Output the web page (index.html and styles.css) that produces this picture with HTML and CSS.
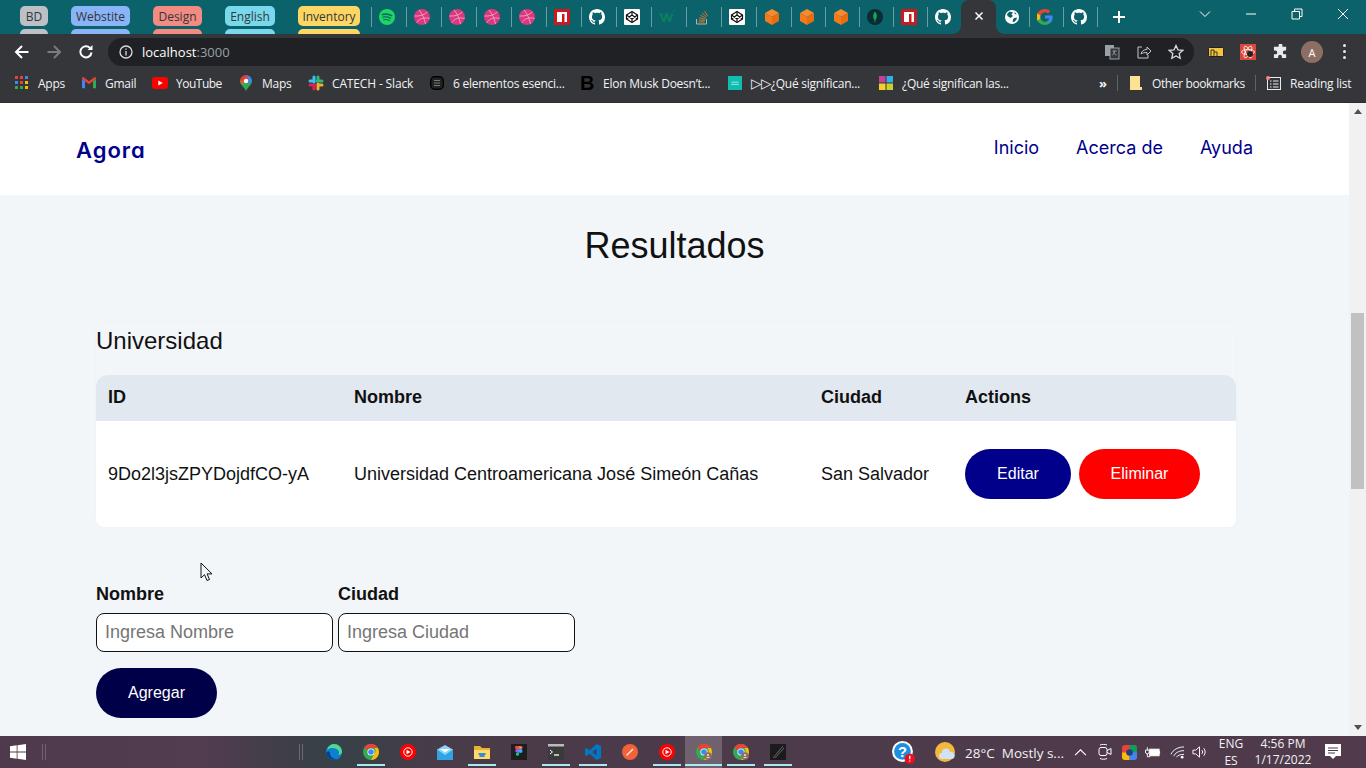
FILE: index.html
```html
<!DOCTYPE html>
<html lang="es">
<head>
<meta charset="utf-8">
<title>Agora</title>
<link rel="stylesheet" href="styles.css">
</head>
<body>
<svg class="defs" width="0" height="0" aria-hidden="true">
  <symbol id="i-github" viewBox="0 0 16 16"><path fill="#fff" d="M8 0C3.58 0 0 3.58 0 8c0 3.54 2.29 6.53 5.47 7.59.4.07.55-.17.55-.38 0-.19-.01-.82-.01-1.49-2.01.37-2.53-.49-2.69-.94-.09-.23-.48-.94-.82-1.13-.28-.15-.68-.52-.01-.53.63-.01 1.08.58 1.23.82.72 1.21 1.87.87 2.33.66.07-.52.28-.87.51-1.07-1.78-.2-3.64-.89-3.64-3.95 0-.87.31-1.59.82-2.15-.08-.2-.36-1.02.08-2.12 0 0 .67-.21 2.2.82.64-.18 1.32-.27 2-.27.68 0 1.36.09 2 .27 1.53-1.04 2.2-.82 2.2-.82.44 1.1.16 1.92.08 2.12.51.56.82 1.27.82 2.15 0 3.07-1.87 3.75-3.65 3.95.29.25.54.73.54 1.48 0 1.07-.01 1.93-.01 2.2 0 .21.15.46.55.38A8.013 8.013 0 0016 8c0-4.42-3.58-8-8-8z"/></symbol>
  <symbol id="i-spotify" viewBox="0 0 16 16"><circle cx="8" cy="8" r="8" fill="#1ed760"/><path fill="none" stroke="#0c626b" stroke-linecap="round" stroke-width="1.6" d="M3.4 5.6c3-.8 6.4-.5 9.2 1"/><path fill="none" stroke="#0c626b" stroke-linecap="round" stroke-width="1.3" d="M4 8.2c2.6-.6 5.2-.3 7.6 1"/><path fill="none" stroke="#0c626b" stroke-linecap="round" stroke-width="1.1" d="M4.6 10.7c2-.4 4-.2 5.9.8"/></symbol>
  <symbol id="i-dribbble" viewBox="0 0 16 16"><circle cx="8" cy="8" r="8" fill="#d8397f"/><g fill="none" stroke="#f7a0c4" stroke-width=".9"><path d="M5 1c3 3.500 5.500 8.500 6.500 14"/><path d="M.4 7c5 .4 9.800-.8 12.800-4"/><path d="M2.800 13.800c2.200-3.800 6.700-6 12.900-4.300"/></g></symbol>
  <symbol id="i-npm" viewBox="0 0 16 16"><rect width="16" height="16" fill="#cb1a1f"/><rect x="3" y="3" width="10" height="10" fill="#fff"/><rect x="8" y="5" width="2.500" height="8" fill="#cb1a1f"/></symbol>
  <symbol id="i-codepen" viewBox="0 0 16 16"><rect width="16" height="16" rx="1" fill="#fff"/><g fill="none" stroke="#111" stroke-width="1.200" stroke-linejoin="round"><path d="M8 2.500 13.500 6v4L8 13.500 2.500 10V6z"/><path d="M8 6 13.500 10M8 6 2.500 10M8 10l5.500-4M8 10 2.500 6M8 2.500V6M8 10v3.500"/></g></symbol>
  <symbol id="i-w3" viewBox="0 0 16 16"><path fill="#0a7f5f" d="M0 4h3l1.500 5.500L6.500 4h2.200l1.900 5.500L12 5h2.500L11.600 13H9.300L7.800 8.500 6.200 13H3.700z"/><path fill="none" stroke="#0a7f5f" stroke-width=".7" d="M13.500 1.500h2l-1 1c.8 0 .8 1.500-.9 1.200"/></symbol>
  <symbol id="i-stack" viewBox="0 0 16 16"><path fill="none" stroke="#b9b2a8" stroke-width="1" d="M2.500 10v5h10v-5"/><g fill="none" stroke="#e8781f" stroke-width=".9"><path d="M4.500 13h6M4.800 11l6 .6M5.200 8.800l6 1.600M6.400 6.300l5.400 2.800M8.200 4l4.500 4M10.500 2l3.200 5"/></g></symbol>
  <symbol id="i-box" viewBox="0 0 16 16"><path fill="#f78a2e" d="M8 0 15 4 8 8 1 4z"/><path fill="#f47a1c" d="M1 4 8 8v8l-7-4z"/><path fill="#e96c10" d="M15 4 8 8v8l7-4z"/></symbol>
  <symbol id="i-mongo" viewBox="0 0 16 16"><circle cx="8" cy="8" r="8" fill="#0b2b36"/><path fill="#13aa52" d="M8 2.500c2.200 2.500 2.600 5.500.5 8.500l-.3 2.500h-.5L7.400 11c-2-2.800-1.500-6 .6-8.500z"/></symbol>
  <symbol id="i-globe" viewBox="0 0 16 16"><circle cx="8" cy="8" r="7" fill="#fff"/><path fill="#0c626b" d="M5.500 2.500 9 3.500 7.500 5.500 9 7 6.500 9 3.500 7l-.5-2zM10 9l3-.5-.7 2.500-2.300 2-1.500-.3.500-2.200zM10.500 3l2.300 2-2 .3z"/></symbol>
  <symbol id="i-google" viewBox="0 0 16 16"><path fill="#4285f4" d="M15.700 8.200c0-.6-.1-1.100-.2-1.600H8v3h4.300c-.2 1-.8 1.800-1.600 2.400v2h2.600c1.500-1.400 2.400-3.400 2.400-5.800z"/><path fill="#34a853" d="M8 16c2.200 0 4-.7 5.300-1.900l-2.600-2c-.7.500-1.600.8-2.700.8-2.100 0-3.900-1.400-4.500-3.300H.4v2.100C1.700 14.300 4.600 16 8 16z"/><path fill="#fbbc05" d="M3.500 9.600c-.3-1-.3-2.200 0-3.200V4.300H.4C-.3 6 -.3 10 .4 11.700z"/><path fill="#ea4335" d="M8 3.200c1.200 0 2.200.4 3 1.200l2.300-2.300C11.900.8 10.100 0 8 0 4.600 0 1.700 1.700.4 4.300l3.100 2.100C4.100 4.600 5.900 3.200 8 3.200z"/></symbol>
  <symbol id="i-chrome" viewBox="0 0 16 16"><circle cx="8" cy="8" r="8" fill="#34a853"/><path fill="#ea4335" d="M8 0a8 8 0 0 1 6.900 4H8a4 4 0 0 0-3.700 2.400L1.500 3.200A8 8 0 0 1 8 0z"/><path fill="#fbbc05" d="M14.900 4A8 8 0 0 1 8 16l3.400-6a4 4 0 0 0-.2-6z"/><circle cx="8" cy="8" r="3.600" fill="#fff"/><circle cx="8" cy="8" r="2.800" fill="#4285f4"/></symbol>
  <symbol id="i-chrome-badge" viewBox="0 0 16 16"><use href="#i-chrome"/><circle cx="12" cy="12" r="3.800" fill="#8d6e63"/><circle cx="12" cy="11" r="1.100" fill="#e8e0dc"/><path d="M10 14c.4-1.500 3.600-1.500 4 0z" fill="#e8e0dc"/></symbol>
  <symbol id="i-ytm" viewBox="0 0 16 16"><circle cx="8" cy="8" r="8" fill="#f00"/><circle cx="8" cy="8" r="4.200" fill="none" stroke="#fff" stroke-width="1"/><path fill="#fff" d="M6.500 5.800 10.500 8l-4 2.200z"/></symbol>
</svg>

<div class="tabstrip">
  <div class="chip-wrap chip-bd"><span class="chip">BD</span><i class="sliver"></i></div>
  <div class="chip-wrap chip-web"><span class="chip">Webstite</span><i class="sliver"></i></div>
  <div class="chip-wrap chip-des"><span class="chip">Design</span><i class="sliver"></i></div>
  <div class="chip-wrap chip-eng"><span class="chip">English</span><i class="sliver"></i></div>
  <div class="chip-wrap chip-inv"><span class="chip">Inventory</span><i class="sliver"></i></div>
  <div class="tab"><svg class="ti"><use href="#i-spotify"/></svg></div>
  <div class="tab"><svg class="ti"><use href="#i-dribbble"/></svg></div>
  <div class="tab"><svg class="ti"><use href="#i-dribbble"/></svg></div>
  <div class="tab"><svg class="ti"><use href="#i-dribbble"/></svg></div>
  <div class="tab"><svg class="ti"><use href="#i-dribbble"/></svg></div>
  <div class="tab"><svg class="ti"><use href="#i-npm"/></svg></div>
  <div class="tab"><svg class="ti"><use href="#i-github"/></svg></div>
  <div class="tab"><svg class="ti"><use href="#i-codepen"/></svg></div>
  <div class="tab"><svg class="ti"><use href="#i-w3"/></svg></div>
  <div class="tab"><svg class="ti"><use href="#i-stack"/></svg></div>
  <div class="tab"><svg class="ti"><use href="#i-codepen"/></svg></div>
  <div class="tab"><svg class="ti"><use href="#i-box"/></svg></div>
  <div class="tab tab-n"><svg class="ti"><use href="#i-box"/></svg></div>
  <div class="tab tab-n"><svg class="ti"><use href="#i-box"/></svg></div>
  <div class="tab tab-n"><svg class="ti"><use href="#i-mongo"/></svg></div>
  <div class="tab tab-n"><svg class="ti"><use href="#i-npm"/></svg></div>
  <div class="tab tab-n"><svg class="ti"><use href="#i-github"/></svg></div>
  <div class="tab-active"><svg class="close-x" viewBox="0 0 10 10"><path d="M1.500 1.500l7 7M8.500 1.500l-7 7"/></svg></div>
  <div class="tab tab-n tab-after"><svg class="ti"><use href="#i-globe"/></svg></div>
  <div class="tab tab-n"><svg class="ti"><use href="#i-google"/></svg></div>
  <div class="tab tab-n"><svg class="ti"><use href="#i-github"/></svg></div>
  <div class="tab-end"><svg class="plus" viewBox="0 0 12 12"><path d="M6 0v12M0 6h12"/></svg></div>
  <div class="winctl">
    <svg class="wi" viewBox="0 0 12 12"><path d="M1 3.500 6 8.500l5-5"/></svg>
    <svg class="wi" viewBox="0 0 12 12"><path d="M1 6h10"/></svg>
    <svg class="wi" viewBox="0 0 12 12"><path d="M1 3.500h7.500V11H1zM3.500 3.500V1H11v7.500H8.500"/></svg>
    <svg class="wi" viewBox="0 0 12 12"><path d="M1 1l10 10M11 1 1 11"/></svg>
  </div>
</div>

<div class="toolbar">
  <svg class="nav-i" viewBox="0 0 16 16"><path d="M14.500 8H2M8 2 2 8l6 6" stroke="#fff"/></svg>
  <svg class="nav-i" viewBox="0 0 16 16"><path d="M1.500 8H14M8 2l6 6-6 6" stroke="#7b7c7f"/></svg>
  <svg class="nav-i" viewBox="0 0 16 16"><path d="M13.500 8.500A5.600 5.600 0 1 1 12 3.900" stroke="#fff"/><path d="M14.500 1v5h-5z" fill="#fff" stroke="none"/></svg>
  <div class="omnibox">
    <svg class="info" viewBox="0 0 14 14"><circle cx="7" cy="7" r="6"/><path d="M7 6v4.500M7 3.500v1.300"/></svg>
    <span class="url">localhost<span class="url-port">:3000</span></span>
    <span class="omni-right">
      <svg class="omni-i" viewBox="0 0 16 16"><rect x="1" y="1" width="9" height="11" fill="#9aa0a6"/><rect x="6" y="4" width="9" height="11" fill="#35363a" stroke="#9aa0a6"/><path d="M8.500 7h4M10.500 7c0 2-1 3.500-2 4M9.500 8.500c.5 1 1.500 2 3 2.500" fill="none" stroke="#9aa0a6"/></svg>
      <svg class="omni-i" viewBox="0 0 16 16"><path d="M6 3H2v11h10v-3" fill="none" stroke="#c4c7c5"/><path d="M5 10c.5-3 3-4.500 6-4.500V3l4 4-4 4V8.500c-2.500 0-4.500.3-6 1.500z" fill="none" stroke="#c4c7c5"/></svg>
      <svg class="omni-i" viewBox="0 0 16 16"><path d="M8 1.500l2 4.400 4.800.5-3.600 3.200 1 4.700L8 11.900l-4.200 2.400 1-4.700L1.200 6.400 6 5.900z" fill="none" stroke="#dadce0" stroke-width="1.300"/></svg>
    </span>
  </div>
  <svg class="ext ext-a" viewBox="0 0 16 12"><rect x=".5" y="1.500" width="15" height="9" rx="1" fill="#f3c33c" stroke="#222"/><path d="M3 10V4h3v6M6 6h3v4" fill="none" stroke="#333"/></svg>
  <svg class="ext ext-b" viewBox="0 0 16 16"><rect width="16" height="16" fill="#d9483b"/><g fill="none" stroke="#fff" stroke-width=".8"><ellipse cx="8" cy="8" rx="6.500" ry="2.500"/><ellipse cx="8" cy="8" rx="6.500" ry="2.500" transform="rotate(60 8 8)"/><ellipse cx="8" cy="8" rx="6.500" ry="2.500" transform="rotate(120 8 8)"/></g><circle cx="10" cy="10" r="3" fill="#222"/></svg>
  <svg class="ext ext-c" viewBox="0 0 16 16"><path fill="#e8eaed" d="M6 1.500a2 2 0 0 1 4 0V3h4v4h-1.500a2 2 0 0 0 0 4H14v4H9.500v-1.500a2 2 0 0 0-4 0V15H1v-4h1.500a2 2 0 0 0 0-4H1V3h5z"/></svg>
  <span class="avatar">A</span>
  <span class="kebab"><i></i><i></i><i></i></span>
</div>

<div class="bookmarks">
  <span class="bm bm-apps"><svg class="bi" viewBox="0 0 14 14"><g fill="#ea4335"><rect width="3" height="3"/><rect x="5" width="3" height="3"/><rect x="10" width="3" height="3" fill="#4285f4"/></g><g fill="#34a853"><rect y="5" width="3" height="3" fill="#4285f4"/><rect x="5" y="5" width="3" height="3" fill="#ea4335"/><rect x="10" y="5" width="3" height="3" fill="#fbbc05"/><rect y="10" width="3" height="3"/><rect x="5" y="10" width="3" height="3"/><rect x="10" y="10" width="3" height="3" fill="#fbbc05"/></g></svg>Apps</span>
  <span class="bm bm-gmail"><svg class="bi" viewBox="0 0 16 14"><path fill="#ea4335" d="M0 2.500 8 8.500l8-6V1l-1.500-1L8 5 1.500 0 0 1z"/><path fill="#4285f4" d="M0 2.500V13h3.500V5.200z"/><path fill="#34a853" d="M16 2.500V13h-3.500V5.200z"/></svg>Gmail</span>
  <span class="bm bm-yt"><svg class="bi bi-w" viewBox="0 0 16 12"><rect width="16" height="12" rx="3" fill="#f00"/><path fill="#fff" d="M6.300 3.400 10.800 6l-4.500 2.600z"/></svg>YouTube</span>
  <span class="bm bm-maps"><svg class="bi bi-m" viewBox="0 0 12 16"><path fill="#34a853" d="M6 16C4 12 0 9.500 0 6h12c0 3.500-4 6-6 10z"/><path fill="#fbbc05" d="M0 6l3 3 2-4z"/><path fill="#4285f4" d="M6 0a6 6 0 0 1 6 6L9 9 5 5z"/><path fill="#ea4335" d="M6 0a6 6 0 0 0-6 6l3 3 6-6z" opacity=".9"/><circle cx="6" cy="6" r="2.200" fill="#fff"/></svg>Maps</span>
  <span class="bm bm-slack"><svg class="bi bi-s" viewBox="0 0 16 16"><g stroke-width="3" stroke-linecap="round"><path stroke="#36c5f0" d="M6 2v5M2 6h4"/><path stroke="#2eb67d" d="M14 6H9M10 2v4"/><path stroke="#ecb22e" d="M10 14V9M14 10h-4"/><path stroke="#e01e5a" d="M2 10h5M6 14v-4"/></g></svg>CATECH - Slack</span>
  <span class="bm bm-six"><svg class="bi" viewBox="0 0 14 14"><rect x=".7" y=".7" width="12.600" height="12.600" rx="4" fill="#222" stroke="#000" stroke-width="1.400"/><path d="M4 4.500h6M4 7h6M4 9.500h6" stroke="#777"/></svg>6 elementos esenci...</span>
  <span class="bm bm-elon"><span class="bi-b">B</span>Elon Musk Doesn’t...</span>
  <span class="bm bm-teal"><svg class="bi bi-w" viewBox="0 0 16 16"><rect width="16" height="16" fill="#12bdb0"/><path d="M4 7h8M3.500 9.500h9" stroke="#bff" stroke-width=".8"/></svg><span class="tri">▷▷</span>¿Qué significan...</span>
  <span class="bm bm-que"><svg class="bi" viewBox="0 0 14 14"><rect width="6.500" height="6.500" fill="#c53e9d"/><rect x="7.500" width="6.500" height="6.500" fill="#2eb0e4"/><rect y="7.500" width="6.500" height="6.500" fill="#f6cf2a"/><rect x="7.500" y="7.500" width="6.500" height="6.500" fill="#c7d12f"/></svg>¿Qué significan las...</span>
  <span class="bm-more">»</span>
  <i class="bm-sep"></i>
  <span class="bm bm-other"><svg class="bi bi-f" viewBox="0 0 12 14"><path fill="#fde293" d="M0 0h10v11h2v3H0z"/></svg>Other bookmarks</span>
  <i class="bm-sep bm-sep-b"></i>
  <span class="bm bm-read"><svg class="bi bi-r" viewBox="0 0 15 14"><rect x="1.500" y="1.500" width="13" height="12" fill="none" stroke="#e8eaed"/><path d="M4 5h1.500M7 5h5.500M4 8h1.500M7 8h5.500M4 11h1.500M7 11h5.500" stroke="#e8eaed"/><circle cx="2" cy="2" r="2" fill="#f28b82"/></svg>Reading list</span>
</div>

<div class="viewport">
  <main class="page">
    <header class="site-header">
      <span class="logo">Agora</span>
      <nav class="site-nav"><a>Inicio</a><a>Acerca de</a><a>Ayuda</a></nav>
    </header>
    <h1 class="title">Resultados</h1>
    <section class="card">
      <h2 class="card-title">Universidad</h2>
      <table class="table">
        <thead><tr><th class="c-id">ID</th><th class="c-name">Nombre</th><th class="c-city">Ciudad</th><th>Actions</th></tr></thead>
        <tbody><tr>
          <td>9Do2l3jsZPYDojdfCO-yA</td>
          <td>Universidad Centroamericana José Simeón Cañas</td>
          <td>San Salvador</td>
          <td class="actions"><button class="btn btn-edit">Editar</button><button class="btn btn-del">Eliminar</button></td>
        </tr></tbody>
      </table>
    </section>
    <form class="form">
      <div class="fields">
        <label class="field"><span class="label">Nombre</span><input class="input" placeholder="Ingresa Nombre"></label>
        <label class="field"><span class="label">Ciudad</span><input class="input" placeholder="Ingresa Ciudad"></label>
      </div>
      <button type="button" class="btn btn-add">Agregar</button>
    </form>
  </main>
  <div class="scrollbar">
    <svg class="arrow" viewBox="0 0 8 5"><path d="M4 0 8 5H0z"/></svg>
    <div class="track"><div class="thumb"></div></div>
    <svg class="arrow" viewBox="0 0 8 5"><path d="M0 0h8L4 5z"/></svg>
  </div>
  <svg class="cursor" viewBox="0 0 13 20"><path d="M1 1v15l3.500-3.300L7 18.500l2.500-1-2.400-5.600H12z" fill="#f3f6f9" stroke="#111" stroke-width="1"/></svg>
</div>

<footer class="taskbar">
  <svg class="win" viewBox="0 0 16 16"><path fill="#fff" d="M0 2.300 6.700 1.300v6.300H0zM7.500 1.200 16 0v7.600H7.500zM0 8.400h6.700v6.300L0 13.700zM7.500 8.400H16V16l-8.500-1.200z"/></svg>
  <i class="grip grip-a"></i>
  <i class="grip grip-b"></i>
  <div class="tb">
    <svg class="tbi" viewBox="0 0 16 16"><circle cx="8" cy="8" r="8" fill="#0c7fd0"/><path fill="#4fd98e" d="M8 0a8 8 0 0 1 8 8c0 2-2 3-4 3 1.500-1 1.500-3.500 0-5C9.500 3.500 4 3 1 6c1-3.500 4-6 7-6z"/><path fill="#0a3f8a" d="M4 8c-1 3 2 7 7 7-5 2-10-1-11-6 1-1 3-2 4-1z"/></svg>
  </div>
  <div class="tb tb-on"><svg class="tbi"><use href="#i-chrome"/></svg></div>
  <div class="tb"><svg class="tbi"><use href="#i-ytm"/></svg></div>
  <div class="tb"><svg class="tbi" viewBox="0 0 16 16"><path fill="#2ea3e6" d="M0 5.500h16V16H0z"/><path fill="#8ad4f5" d="M0 5.500 8 11l8-5.500L8 1z"/><path fill="#fff" d="M3 5h10L8 8.500z"/></svg></div>
  <div class="tb tb-on"><svg class="tbi" viewBox="0 0 16 16"><path fill="#e8b13a" d="M0 2h6l2 2h8v11H0z"/><path fill="#ffd968" d="M0 6h16v9H0z"/><path fill="#2b8fd6" d="M4.500 9h7v2h-1v2h-5v-2h-1z"/></svg></div>
  <div class="tb"><svg class="tbi" viewBox="0 0 16 16"><rect width="16" height="16" fill="#1e1e1e"/><circle cx="9.500" cy="7" r="2" fill="#1abcfe"/><path fill="#f24e1e" d="M5 2h3v3H6a1.500 1.500 0 0 1-1-3z"/><path fill="#ff7262" d="M8 2h2a1.500 1.500 0 0 1 0 3H8z"/><path fill="#a259ff" d="M6 5h2v3.500H6a1.700 1.700 0 0 1 0-3.500z"/><path fill="#0acf83" d="M6 8.500h2V11a1.700 1.700 0 1 1-2-2.500z"/></svg></div>
  <div class="tb tb-on"><svg class="tbi" viewBox="0 0 16 16"><rect width="16" height="16" fill="#3a3a3a"/><rect width="16" height="2.500" fill="#bbb"/><path d="M2 6l2.500 2L2 10" fill="none" stroke="#fff"/><path d="M6 11h5" stroke="#fff" stroke-width="1.300"/></svg></div>
  <div class="tb tb-on"><svg class="tbi" viewBox="0 0 16 16"><path fill="#0078c8" d="M11.500 0 16 2v12l-4.500 2L4.500 9.500 1.500 12 0 11V5l1.500-1 3 2.500zM11.500 4.500 7.500 8l4 3.500z"/></svg></div>
  <div class="tb"><svg class="tbi" viewBox="0 0 16 16"><circle cx="8" cy="8" r="8" fill="#f0623a"/><path d="M4.500 11.500 11 5" stroke="#ffe5d9" stroke-width="1.500"/></svg></div>
  <div class="tb tb-on"><svg class="tbi"><use href="#i-ytm"/></svg></div>
  <div class="tb tb-on tb-active"><svg class="tbi"><use href="#i-chrome-badge"/></svg></div>
  <div class="tb tb-on"><svg class="tbi"><use href="#i-chrome-badge"/></svg></div>
  <div class="tb tb-on"><svg class="tbi" viewBox="0 0 16 16"><rect width="16" height="16" fill="#1b1b1d"/><path d="M3 14 13 2M5 14 14 4" stroke="#666"/></svg></div>
  <svg class="tray-help" viewBox="0 0 22 22"><circle cx="10" cy="10" r="10" fill="#fff"/><circle cx="10" cy="10" r="8" fill="#1d8fe0"/><text class="help-q" x="10" y="15">?</text><circle cx="17" cy="17" r="5" fill="#e81123"/><path d="M17 14v3.500M17 18.700v1" stroke="#fff" stroke-width="1.200"/></svg>
  <svg class="tray-sun" viewBox="0 0 20 20"><circle cx="10" cy="10" r="10" fill="#f4b83c"/><path fill="#cfe3f5" d="M7 17a3 3 0 0 1 0-6 4 4 0 0 1 8-1 3.500 3.500 0 0 1 2 7z"/></svg>
  <span class="weather">28°C&nbsp; Mostly s...</span>
  <svg class="tray tray-up" viewBox="0 0 12 12"><path d="M1 8.500 6 3.500l5 5"/></svg>
  <svg class="tray tray-meet" viewBox="0 0 14 16"><rect x="1" y="3.500" width="8" height="8" rx="2"/><path d="M9 6.500l4-2v6l-4-2M2 14.500c2 1 5 1 7 0M2 1c2-.8 5-.8 7 0"/></svg>
  <svg class="tray-wheel" viewBox="0 0 16 16"><rect width="16" height="16" rx="3.500" fill="#ea4335"/><path d="M8 0h4.500A3.500 3.500 0 0 1 16 3.500V8H8z" fill="#0f9d58"/><path d="M0 8h8v8H3.500A3.500 3.500 0 0 1 0 12.500z" fill="#fbbc05"/><path d="M8 8h8v4.500a3.500 3.500 0 0 1-3.500 3.500H8z" fill="#4285f4"/><circle cx="8" cy="8" r="3.500" fill="#1d3f8a"/></svg>
  <svg class="tray tray-batt" viewBox="0 0 17 12"><rect x="5" y="3" width="10" height="7" fill="#fff"/><path d="M15.500 5v3M2.500 1v3M0.500 4h4v2a2 2 0 0 1-4 0zM2.500 8v3h3"/></svg>
  <svg class="tray tray-wifi" viewBox="0 0 16 14"><path d="M1 9c2-5 8-8 14-8M4 11c1-3 5-6 11-6M7 12c1-2 4-3 8-3"/><circle cx="13" cy="12" r="1.500" fill="#fff" stroke="none"/></svg>
  <svg class="tray tray-vol" viewBox="0 0 16 14"><path d="M1 5h3l4-3.500v11L4 9H1zM10.500 5c1 1 1 3 0 4M12.500 3c2 2 2 6 0 8"/></svg>
  <div class="lang"><span>ENG</span><span>ES</span></div>
  <div class="clock"><span>4:56 PM</span><span>1/17/2022</span></div>
  <svg class="tray-note" viewBox="0 0 16 16"><path fill="#fff" d="M0 0h16v12h-5l-3 3-3-3H0z"/><path d="M3 4h10M3 6.500h10M3 9h7" stroke="#4b394b"/></svg>
</footer>
</body>
</html>
```
FILE: styles.css
```css
* { box-sizing: border-box; }
html, body { margin: 0; height: 100%; }
body {
  width: 1366px;
  height: 768px;
  overflow: hidden;
  display: flex;
  flex-direction: column;
  font-family: "Liberation Sans", Arial, sans-serif;
  background: #f3f6f9;
}
.defs { display: block; height: 0; }

/* tab strip */
.tabstrip {
  flex: 0 0 34px;
  height: 34px;
  overflow: hidden;
  background: #0c626b;
  display: flex;
  align-items: stretch;
  padding-left: 20px;
  font-family: "Open Sans", sans-serif;
}
.chip-wrap { display: flex; flex-direction: column; padding-top: 6px; margin-right: 23px; }
.chip {
  height: 22px;
  display: flex;
  align-items: center;
  justify-content: center;
  border-radius: 5px;
  font-size: 12px;
  color: #33363a;
}
.sliver { height: 5px; margin-top: 3px; border-radius: 5px 5px 0 0; }
.chip-bd { width: 28px; }
.chip-web { width: 59px; }
.chip-des { width: 49px; }
.chip-eng { width: 50px; }
.chip-inv { width: 62px; margin-right: 11px; }
.chip-bd .chip, .chip-bd .sliver { background: #bdc1c6; }
.chip-web .chip, .chip-web .sliver { background: #8ab4f8; }
.chip-des .chip, .chip-des .sliver { background: #f28b82; }
.chip-eng .chip, .chip-eng .sliver { background: #78d9ec; }
.chip-inv .chip, .chip-inv .sliver { background: #fdd663; }

.tab {
  flex: 0 0 35px;
  width: 35px;
  height: 20px;
  margin-top: 7px;
  padding-right: 5px;
  border-left: 1px solid rgba(255, 255, 255, .38);
  display: flex;
  align-items: center;
  justify-content: center;
}
.tab-n { flex-basis: 34px; width: 34px; padding-right: 4px; }
.tab-after { border-left-color: transparent; flex-basis: 33px; width: 33px; padding-right: 3px; }
.ti { width: 16px; height: 16px; display: block; flex: none; }
.tab-active {
  flex: 0 0 35px;
  position: relative;
  background: #35363a;
  border-radius: 8px 8px 0 0;
  display: flex;
  align-items: center;
  justify-content: center;
  padding-bottom: 2px;
}
.tab-active::before,
.tab-active::after {
  content: "";
  position: absolute;
  bottom: 0;
  width: 8px;
  height: 8px;
}
.tab-active::before { left: -8px; background: radial-gradient(circle at 0 0, transparent 7.500px, #35363a 8px); }
.tab-active::after { right: -8px; background: radial-gradient(circle at 100% 0, transparent 7.500px, #35363a 8px); }
.close-x { width: 10px; height: 10px; fill: none; stroke: #fff; stroke-width: 1.5; }
.tab-end {
  flex: 0 0 46px;
  height: 20px;
  margin-top: 7px;
  border-left: 1px solid rgba(255, 255, 255, .38);
  display: flex;
  align-items: center;
  padding-left: 15px;
}
.plus { width: 12px; height: 12px; fill: none; stroke: #fff; stroke-width: 2; }
.winctl { display: flex; margin-left: 56px; padding-top: 8px; gap: 34px; }
.wi { width: 12px; height: 12px; fill: none; stroke: #fff; stroke-width: 1; }

/* toolbar */
.toolbar {
  flex: 0 0 32px;
  background: #35363a;
  display: flex;
  align-items: flex-end;
  padding-left: 14px;
  color: #fff;
}
.nav-i { width: 16px; height: 16px; margin: 0 16px 6px 0; fill: none; stroke-width: 2; flex: none; }
.nav-i:nth-of-type(3) { margin-right: 14px; }
.omnibox {
  width: 1086px;
  height: 28px;
  background: #202124;
  border-radius: 14px;
  display: flex;
  align-items: center;
  padding-left: 11px;
  font-family: "Open Sans", sans-serif;
}
.info { width: 14px; height: 14px; fill: none; stroke: #dadce0; stroke-width: 1.300; flex: none; }
.url { margin-left: 9px; font-size: 13px; color: #fff; }
.url-port { color: #9aa0a6; }
.omni-right { margin-left: auto; display: flex; gap: 16px; padding-right: 10px; }
.omni-i { width: 16px; height: 16px; display: block; }
.ext { flex: none; margin-bottom: 6px; }
.ext-a { width: 16px; height: 12px; margin: 0 0 8px 14px; }
.ext-b { width: 16px; height: 16px; margin-left: 16px; }
.ext-c { width: 15px; height: 15px; margin-left: 17px; margin-bottom: 7px; }
.avatar {
  width: 22px;
  height: 22px;
  margin: 0 0 3px 13px;
  border-radius: 50%;
  background: #8d6e63;
  color: #fff;
  font: 11px "Open Sans", sans-serif;
  display: flex;
  align-items: center;
  justify-content: center;
}
.kebab { display: flex; flex-direction: column; gap: 3px; margin: 0 0 7px 20px; }
.kebab i { width: 3px; height: 3px; border-radius: 50%; background: #e8eaed; }

/* bookmarks */
.bookmarks {
  flex: 0 0 37px;
  background: #35363a;
  border-bottom: 1px solid #2b2c2f;
  display: flex;
  align-items: center;
  padding: 0 0 2px 15px;
  font: 12px "Open Sans", sans-serif;
  color: #f1f3f4;
}
.bm { display: flex; align-items: center; white-space: nowrap; flex: none; letter-spacing: -.25px; }
.bi { width: 14px; height: 14px; margin-right: 9px; flex: none; }
.bi-w { width: 16px; margin-right: 8px; }
.bi-m { width: 12px; height: 16px; margin-right: 10px; }
.bi-s { width: 16px; height: 16px; margin-right: 8px; }
.bi-f { width: 12px; margin-right: 10px; }
.bi-r { width: 15px; height: 14px; }
.bi-b { width: 14px; margin-right: 9px; font: 700 20px/14px "Liberation Sans", sans-serif; color: #000; letter-spacing: 0; }
.tri { font: 13.500px "DejaVu Sans", sans-serif; letter-spacing: -.5px; }
.bm-apps { width: 67px; }
.bm-gmail { width: 70px; }
.bm-yt { width: 88px; letter-spacing: -.5px; }
.bm-maps { width: 68px; }
.bm-slack { width: 122px; letter-spacing: -.15px; }
.bm-six { width: 150px; }
.bm-elon { width: 147px; }
.bm-teal { width: 152px; }
.bm-que { width: 220px; }
.bm-more { width: 18px; font-size: 13px; font-weight: 700; flex: none; }
.bm-sep { width: 1px; height: 16px; background: #5f6368; flex: none; margin-right: 12px; }
.bm-sep-b { margin-right: 10px; }
.bm-other { width: 125px; letter-spacing: -.38px; }
.bm-read { width: 90px; }

/* page */
.viewport { flex: 1 1 auto; display: flex; position: relative; min-height: 0; overflow: hidden; }
.page { flex: 1 1 auto; min-width: 0; background: #f3f6f9; }
.site-header {
  height: 92px;
  background: #fff;
  display: flex;
  justify-content: space-between;
  padding: 0 96px 0 76px;
}
.logo {
  align-self: center;
  margin-top: 2px;
  font-family: Inter, sans-serif;
  font-size: 22px;
  font-weight: 600;
  letter-spacing: 1px;
  color: #00008b;
  font-feature-settings: "cv11" 1;
}
.site-nav {
  display: flex;
  gap: 37px;
  padding-top: 34px;
  font-family: Inter, sans-serif;
  font-size: 18px;
  line-height: 22px;
  color: #00008b;
}
.title { margin: 28px 0 0; height: 46px; line-height: 46px; text-align: center; font-size: 36px; font-weight: 400; color: #111; }
.card {
  width: 1140px;
  height: 205px;
  margin: 53px 0 0 96px;
  border-radius: 8px;
  box-shadow: 0 0 6px rgba(0, 0, 0, .02);
}
.card-title { margin: 0; height: 53px; padding-top: 5px; line-height: 28px; font-size: 24px; font-weight: 400; color: #111; }
.table { width: 100%; border-collapse: separate; border-spacing: 0; table-layout: fixed; font-size: 18px; color: #111; }
.table th { height: 46px; padding: 0 12px 2px; background: #e2e8f0; text-align: left; font-weight: 700; }
.table th:first-child { border-top-left-radius: 12px; }
.table th:last-child { border-top-right-radius: 12px; }
.table td { height: 106px; padding: 0 12px; background: #fff; }
.table td:first-child { border-bottom-left-radius: 8px; }
.table td:last-child { border-bottom-right-radius: 8px; }
.c-id { width: 246px; }
.c-name { width: 467px; }
.c-city { width: 144px; }
.actions { white-space: nowrap; }
.btn { height: 50px; border: 0; border-radius: 25px; color: #fff; font: 16px "Liberation Sans", Arial, sans-serif; padding: 0; }
.btn-edit { width: 106px; background: #00008b; margin-right: 8px; }
.btn-del { width: 121px; background: #f00; }
.btn-add { width: 121px; background: #000048; display: block; }
.form { margin: 56px 0 0 96px; }
.fields { display: flex; gap: 5px; margin-bottom: 16px; }
.field { display: flex; flex-direction: column; }
.label { height: 22px; line-height: 22px; margin-bottom: 8px; font-size: 18px; font-weight: 700; color: #111; }
.input {
  width: 237px;
  height: 39px;
  border: 1px solid #111;
  border-radius: 8px;
  background: #fff;
  padding: 0 8px;
  font: 18px "Liberation Sans", Arial, sans-serif;
}
.input::placeholder { color: #757575; opacity: 1; }

.scrollbar { flex: 0 0 17px; background: #f1f1f1; display: flex; flex-direction: column; align-items: center; }
.arrow { flex: 0 0 5px; width: 8px; height: 5px; margin: 6px 0; fill: #505050; }
.track { flex: 1 1 auto; width: 13px; padding-top: 193px; }
.thumb { width: 13px; height: 176px; background: #c1c1c1; }
.cursor { position: absolute; left: 200px; top: 459px; width: 13px; height: 20px; }

/* taskbar */
.taskbar {
  flex: 0 0 32px;
  height: 32px;
  display: flex;
  align-items: center;
  background: linear-gradient(90deg, #4e3a4c 0, #523c50 200px, #3c3f47 300px, #374148 335px, #4a3b49 450px, #503a4c 1366px);
  color: #f2f2f2;
  font: 13px "Open Sans", sans-serif;
  padding-left: 10px;
}
.win { width: 16px; height: 16px; flex: none; }
.grip { width: 4px; height: 16px; border-left: 1px solid #6f6472; border-right: 1px solid #6f6472; flex: none; }
.grip-a { margin-left: 16px; }
.grip-b { margin-left: 253px; margin-right: 12px; }
.tb { flex: 0 0 37px; height: 32px; display: flex; align-items: center; justify-content: center; position: relative; }
.tb-on::after { content: ""; position: absolute; left: 5px; right: 4px; bottom: 2px; height: 2px; background: #a9eaf2; }
.tb-active { background: rgba(255, 255, 255, .2); }
.tb-active::after { left: 0; right: 0; }
.tbi { width: 16px; height: 16px; display: block; }
.tray-help { width: 23px; height: 23px; margin-left: 96px; flex: none; }
.help-q { font: 700 14px "Liberation Sans", sans-serif; fill: #fff; text-anchor: middle; }
.tray-sun { width: 20px; height: 20px; margin-left: 20px; flex: none; }
.weather { margin-left: 10px; padding-top: 1px; width: 106px; white-space: nowrap; font-size: 13.500px; }
.tray { fill: none; stroke: #fff; stroke-width: 1; flex: none; }
.tray-up { width: 13px; height: 13px; margin-left: 3px; }
.tray-meet { width: 14px; height: 16px; margin-left: 11px; }
.tray-wheel { width: 15px; height: 15px; margin-left: 10px; flex: none; }
.tray-batt { width: 16px; height: 12px; margin-left: 8px; }
.tray-wifi { width: 15px; height: 13px; margin-left: 9px; }
.tray-vol { width: 15px; height: 14px; margin-left: 7px; }
.lang { display: flex; flex-direction: column; align-items: center; width: 26px; margin-left: 11px; font-size: 12px; line-height: 17px; }
.clock { display: flex; flex-direction: column; align-items: center; width: 66px; margin-left: 6px; font-size: 12px; line-height: 16px; white-space: nowrap; }
.tray-note { width: 16px; height: 16px; margin-left: 9px; flex: none; }
```
